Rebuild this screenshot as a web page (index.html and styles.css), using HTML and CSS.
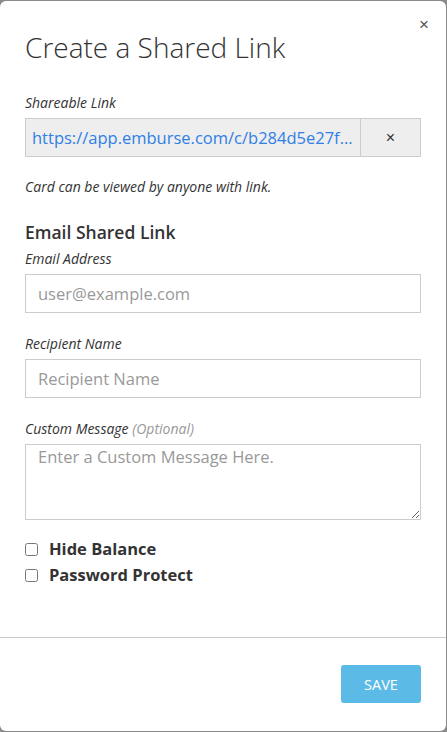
FILE: index.html
```html
<!DOCTYPE html>
<html lang="en">

<head>
    <meta charset="UTF-8">
    <meta name="viewport" content="width=device-width, initial-scale=1.0">
    <title>Create a Shared Link</title>
    <link rel="stylesheet" href="styles.css">
</head>

<body>

    <div class="modal">
        <div class="modal-body">
            <button class="close" type="button">&times;</button>
            <h2>Create a Shared Link</h2>

            <label class="field-label">Shareable Link</label>
            <div class="link-box">
                <span class="link-text">https://app.emburse.com/c/b284d5e27f91a0c3d6e8</span>
                <button class="link-clear" type="button">&times;</button>
            </div>
            <p class="hint">Card can be viewed by anyone with link.</p>

            <h3>Email Shared Link</h3>
            <form id="share-form">
                <label class="field-label" for="email">Email Address</label>
                <input type="email" id="email" placeholder="user@example.com">

                <label class="field-label" for="recipient">Recipient Name</label>
                <input type="text" id="recipient" placeholder="Recipient Name">

                <label class="field-label" for="message">Custom Message <span class="optional">(Optional)</span></label>
                <textarea id="message" placeholder="Enter a Custom Message Here."></textarea>

                <label class="check"><input type="checkbox"> Hide Balance</label>
                <label class="check"><input type="checkbox"> Password Protect</label>
            </form>
        </div>
        <div class="modal-footer">
            <button class="save" type="submit" form="share-form">SAVE</button>
        </div>
    </div>

</body>

</html>
```

FILE: styles.css
```css
html, body {
    margin: 0;
    height: 100%;
}

body {
    background-color: #8a8a8a;
    font-family: "Open Sans", Arial, sans-serif;
    color: #333;
}

.modal {
    margin-top: 1px;
    height: 730px;
    width: 446px;
    box-sizing: border-box;
    background-color: #fff;
    border-radius: 6px;
    display: flex;
    flex-direction: column;
}

.modal-body {
    position: relative;
    padding: 24px 25px 0 25px;
    flex: 1;
}

.close {
    position: absolute;
    top: 14px;
    right: 17px;
    border: none;
    background: none;
    font-size: 17px;
    color: #555;
    padding: 0;
    cursor: pointer;
    font-family: Arial, sans-serif;
}

h2 {
    margin: 4px 0 28px;
    font-weight: 300;
    font-size: 28px;
    line-height: 36px;
    color: #333;
}

.field-label {
    display: block;
    font-style: italic;
    font-size: 14px;
    line-height: 20px;
    margin-bottom: 5px;
    color: #333;
}

.optional {
    color: #999;
}

.link-box {
    display: flex;
    height: 39px;
    box-sizing: border-box;
    border: 1px solid #ccc;
    background-color: #eee;
}

.link-text {
    flex: 1;
    min-width: 0;
    padding: 0 6px;
    line-height: 37px;
    font-size: 16.5px;
    color: #2f7fe6;
    white-space: nowrap;
    overflow: hidden;
    text-overflow: ellipsis;
}

.link-clear {
    width: 60px;
    border: none;
    border-left: 1px solid #ccc;
    background: none;
    font-size: 16px;
    color: #333;
    padding: 0;
    font-family: Arial, sans-serif;
}

.hint {
    font-style: italic;
    font-size: 14px;
    line-height: 20px;
    margin: 20px 0 23px;
}

h3 {
    font-size: 17.5px;
    font-weight: 600;
    margin: 0 0 5px;
    line-height: 24px;
}

input[type="email"],
input[type="text"],
textarea {
    display: block;
    width: 100%;
    box-sizing: border-box;
    height: 39px;
    margin: 0 0 21px;
    padding: 6px 12px;
    border: 1px solid #ccc;
    font-family: inherit;
    font-size: 16.5px;
    color: #333;
}

textarea {
    height: 76px;
    padding-top: 0;
    margin-bottom: 16px;
}

::placeholder {
    color: #999;
}

.check {
    display: flex;
    align-items: center;
    font-weight: 700;
    font-size: 16.5px;
    line-height: 26px;
}

.check input {
    width: 13px;
    height: 13px;
    margin: 0 11px 0 0;
}

.modal-footer {
    border-top: 1px solid #ccc;
    padding: 27px 25px 28px;
    display: flex;
    justify-content: flex-end;
}

.save {
    width: 80px;
    height: 38px;
    border: none;
    border-radius: 3px;
    background-color: #5bbae6;
    color: #fff;
    font-family: inherit;
    font-size: 14.5px;
    cursor: pointer;
}
```
